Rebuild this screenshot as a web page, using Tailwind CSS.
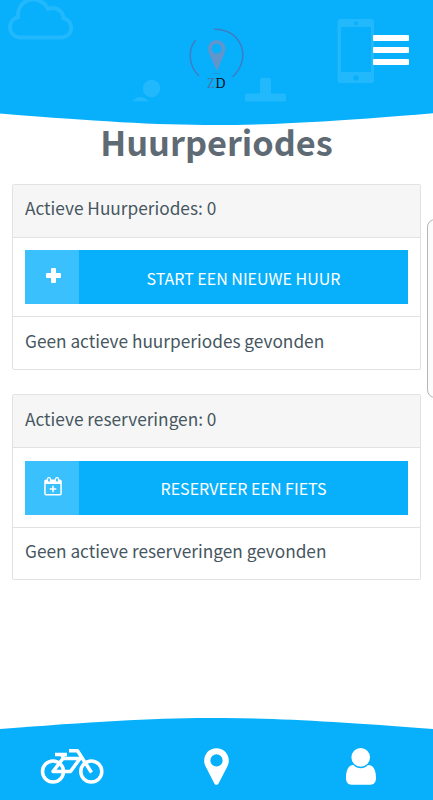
<!DOCTYPE html>
<html lang="nl">
  <head>
    <meta charset="UTF-8" />
    <meta name="viewport" content="width=device-width, initial-scale=1.0" />
    <title>Huurperiodes</title>
    <script src="https://cdn.jsdelivr.net/npm/@tailwindcss/browser@4"></script>
  </head>
  <body class="relative flex flex-col w-[433px] h-[800px] overflow-hidden bg-white text-[#465661] font-['Noto_Sans_CJK_SC',sans-serif]">
    <!-- Header -->
    <header class="relative h-[126px] shrink-0">
      <svg class="block w-full h-full" viewBox="0 0 433 126" fill="none">
        <path d="M0 0H433V113.2C243 128.9 190 128.9 0 113.5Z" fill="#08b0fc" />
        <g fill="#fff" fill-opacity=".1">
          <path d="M20 37.500C7 36 7 20 18 17C17 -3 41 -6 48 9C56 6 63 11 63.500 18C75 22 73 36 62 37.500Z" fill="none" stroke="#fff" stroke-opacity=".1" stroke-width="4" />
          <circle cx="151.500" cy="88.500" r="8.700" />
          <path d="M132 101.300Q140.500 92.500 149 101.300Z" />
          <path d="M262 78h7a2 2 0 0 1 2 2v13.500h13a2 2 0 0 1 2 2v6h-41v-6a2 2 0 0 1 2-2h13v-13.500a2 2 0 0 1 2-2Z" />
          <path fill-rule="evenodd" d="M340 19h31.500a2.500 2.500 0 0 1 2.500 2.500v59a2.500 2.500 0 0 1-2.500 2.500H340a2.500 2.500 0 0 1-2.500-2.500v-59A2.500 2.500 0 0 1 340 19ZM341 27v45h30V27ZM356 21.200a2 2 0 1 0 0 4 2 2 0 0 0 0-4ZM356 75.200a2.600 2.600 0 1 0 0 5.200 2.600 2.600 0 0 0 0-5.200Z" />
        </g>
        <!-- Logo -->
        <g stroke="#3f7cc4" stroke-width="1.500">
          <path d="M195.500 40.300C187.500 50 188.500 66 199 76" />
          <path d="M214 29.200C242 28.500 252.500 59 232.300 77" />
          <path d="M213 73.500h7" stroke-width=".6" />
        </g>
        <path fill="#6195cc" fill-rule="evenodd" d="M216.700 40a8.700 8.700 0 0 1 8.700 9C225.400 53 220 63 217 71.500C214 63 208 53 208 49A8.700 8.700 0 0 1 216.700 40ZM216.700 43.800a5 5 0 1 0 0 10 5 5 0 0 0 0-10Z" />
        <text x="207" y="88" class="font-['Liberation_Serif',serif] text-[14px]" fill="#4477b0" textLength="8" lengthAdjust="spacingAndGlyphs">Z</text>
        <text x="215.500" y="88" class="font-['Liberation_Serif',serif] text-[14px]" fill="#0a1018" textLength="10" lengthAdjust="spacingAndGlyphs">D</text>
      </svg>
      <button class="absolute left-[373px] top-[34px] flex flex-col gap-[6px]" aria-label="Menu">
        <span class="w-9 h-[6px] mt-[0.500px] rounded-[1px] bg-white"></span>
        <span class="w-9 h-[6px] rounded-[1px] bg-white"></span>
        <span class="w-9 h-[6px] rounded-[1px] bg-white"></span>
      </button>
    </header>

    <main class="flex-1 px-3">
      <h1 class="h-[58px] text-center text-[34.300px] leading-[30px] font-bold text-[#5f6b74]">Huurperiodes</h1>

      <!-- Actieve huurperiodes -->
      <section class="h-[186px] border border-[#e2e2e2] rounded-[2px] text-[17.250px]">
        <div class="h-[53px] px-3 leading-[45px] bg-[#f6f6f6] border-b border-[#e2e2e2]">Actieve Huurperiodes: 0</div>
        <div class="h-[79px] p-3 border-b border-[#e2e2e2]">
          <button class="flex w-full h-[54px] bg-[#08b0fc] text-white">
            <span class="w-[54px] h-full flex justify-center items-center pl-[2px] bg-[#39c0fd]">
              <svg class="w-[15px] h-[15px] -mt-[3px]" viewBox="0 0 15 15" fill="#fff">
                <path d="M6 0h3a1 1 0 0 1 1 1v4h4a1 1 0 0 1 1 1v3a1 1 0 0 1-1 1h-4v4a1 1 0 0 1-1 1H6a1 1 0 0 1-1-1v-4H1a1 1 0 0 1-1-1V6a1 1 0 0 1 1-1h4V1a1 1 0 0 1 1-1Z" />
              </svg>
            </span>
            <span class="flex-1 text-center text-[16px] leading-[57px]">START EEN NIEUWE HUUR</span>
          </button>
        </div>
        <div class="h-[52px] px-3 leading-[47px]">Geen actieve huurperiodes gevonden</div>
      </section>

      <!-- Actieve reserveringen -->
      <section class="mt-6 h-[186px] border border-[#e2e2e2] rounded-[2px] text-[17.250px]">
        <div class="h-[53px] px-3 leading-[47px] bg-[#f6f6f6] border-b border-[#e2e2e2]">Actieve reserveringen: 0</div>
        <div class="h-[80px] px-3 pt-[12.500px] border-b border-[#e2e2e2]">
          <button class="flex w-full h-[54px] bg-[#08b0fc] text-white">
            <span class="w-[54px] h-full flex justify-center items-center pl-[1px] bg-[#39c0fd]">
              <svg class="w-[18px] h-[19px] -mt-[2px]" viewBox="0 0 18 19" fill="none" stroke="#fff">
                <path fill="#fff" stroke="none" fill-rule="evenodd" d="M2 2.500h14a1.800 1.800 0 0 1 1.800 1.800v12.400a1.800 1.800 0 0 1-1.800 1.800H2A1.800 1.800 0 0 1 .2 16.700V4.300A1.800 1.800 0 0 1 2 2.500ZM1.700 7v10h14.600V7Z" />
                <rect x="3.500" y=".7" width="3" height="4.500" rx="1.300" fill="#39c0fd" stroke-width="1.200" />
                <rect x="11.500" y=".7" width="3" height="4.500" rx="1.300" fill="#39c0fd" stroke-width="1.200" />
                <path d="M9 8.700v6.600M5.700 12h6.600" stroke-width="1.500" />
              </svg>
            </span>
            <span class="flex-1 text-center text-[16px] leading-[55px]">RESERVEER EEN FIETS</span>
          </button>
        </div>
        <div class="h-[51px] px-3 leading-[45px]">Geen actieve reserveringen gevonden</div>
      </section>
    </main>

    <!-- Side panel handle -->
    <div class="absolute left-[427px] top-[219px] w-5 h-[179px] rounded-[8px] border border-[#b5b5b5] bg-[#fcfcfc]"></div>

    <!-- Bottom navigation -->
    <footer class="h-[82px] shrink-0">
      <svg class="block w-full h-full" viewBox="0 718 433 82" fill="none">
        <path d="M0 800V729C190 714.300 243 714.300 433 729V800Z" fill="#08b0fc" />
        <!-- Bike -->
        <g stroke="#fff" stroke-width="3.500" stroke-linejoin="round">
          <circle cx="53" cy="771.500" r="10.500" />
          <circle cx="91.300" cy="771.500" r="10.500" />
          <path d="M55 754.500H67M61.500 755L64 758.500M69 750.800H77.500L91.500 772.500M63 758.500H80L70.500 771.500H53L63 758.500" />
        </g>
        <path fill="#fff" fill-rule="evenodd" d="M216.500 748.300c7 0 12.300 5.500 12.300 12.200 0 3-.8 4.500-1.600 6.300l-8.500 16.500c-1 2-3.500 2-4.500 0l-8.400-16.500c-.9-1.800-1.600-3.300-1.600-6.300 0-6.700 5.300-12.200 12.300-12.200ZM216.500 754.300a6.100 6.100 0 1 0 0 12.200 6.100 6.100 0 0 0 0-12.200Z" />
        <g fill="#fff">
          <circle cx="360.700" cy="757.400" r="9.300" />
          <path d="M353.500 765C357.500 769.300 364 769.300 368 765C374 765 376 771 376 778C376 782 374 784.700 370.500 784.700H351.500C348 784.700 346 782 346 778C346 771 348 765 353.500 765Z" />
        </g>
      </svg>
    </footer>
  </body>
</html>
